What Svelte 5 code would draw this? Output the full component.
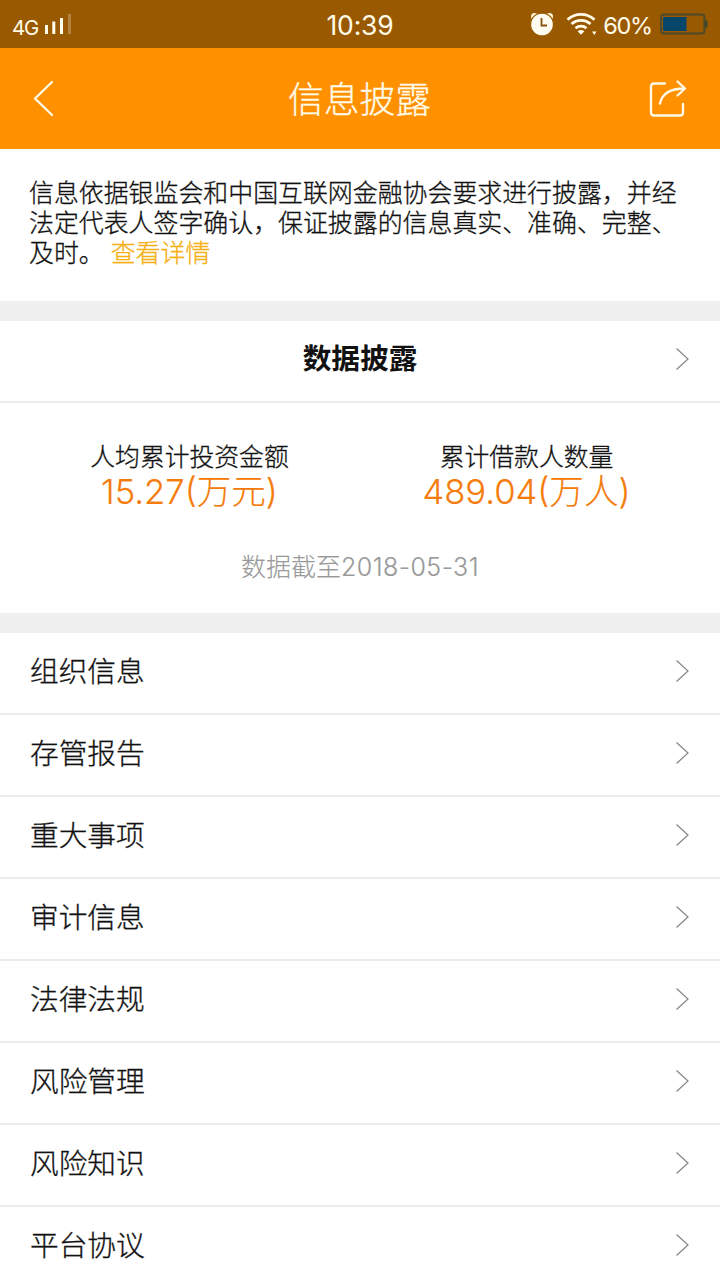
<script lang="ts">
	interface Stat {
		label: string;
		value: string;
		unit: string;
	}

	const stats: Stat[] = [
		{ label: '人均累计投资金额', value: '15.27', unit: '万元' },
		{ label: '累计借款人数量', value: '489.04', unit: '万人' }
	];

	const items = [
		'组织信息',
		'存管报告',
		'重大事项',
		'审计信息',
		'法律法规',
		'风险管理',
		'风险知识',
		'平台协议'
	];
</script>

{#snippet chevron()}
	<svg class="chevron" width="16" height="24" viewBox="0 0 16 24" aria-hidden="true">
		<path d="M2.500 1.500 L14 12 L2.500 22.500" />
	</svg>
{/snippet}

<div class="screen">
	<div class="status">
		<div class="status-left">
			<span class="network">4G</span>
			<svg width="30" height="22" viewBox="0 0 30 22" aria-hidden="true">
				<path d="M2 12h3v9H2zM9.300 8.500h3v12.500h-3zM17 5h3v16h-3z" fill="#fffbe8" />
				<path d="M25 1h3v20h-3z" fill="#b38240" />
			</svg>
		</div>
		<span class="time">10:39</span>
		<div class="status-right">
			<svg width="24" height="24" viewBox="0 0 24 24" aria-hidden="true">
				<circle cx="4.500" cy="4.500" r="3.500" fill="#fff6d8" />
				<circle cx="19.500" cy="4.500" r="3.500" fill="#fff6d8" />
				<circle cx="12" cy="12.500" r="11.400" fill="#fffdf2" stroke="#995900" stroke-width="1.200" />
				<path d="M11.500 6v7.500H17" fill="none" stroke="#8a5310" stroke-width="1.800" />
			</svg>
			<svg class="wifi" width="31" height="24" viewBox="0 0 31 24" aria-hidden="true">
				<path d="M1.500 7.700a20 20 0 0 1 27 0M5.500 12a14 14 0 0 1 19 0M9.500 16.200a8.500 8.500 0 0 1 11 0" fill="none" stroke="#fffbe8" stroke-width="2.800" />
				<path d="M11.600 19.200q3.400-2.600 6.800 0L15 22.800zM26 19.500h4.500l-2.250 3.500z" fill="#fffbe8" />
			</svg>
			<span class="percent">60%</span>
			<svg class="battery" width="48" height="22" viewBox="0 0 48 22" aria-hidden="true">
				<rect x="1" y="1.500" width="43.500" height="19" rx="3" fill="none" stroke="#4c4a28" stroke-width="2" />
				<rect x="3" y="4" width="23.500" height="14" fill="#08456b" />
				<path d="M45 7.500h1.500q1 0 1 1v5q0 1-1 1H45z" fill="#3c4630" />
			</svg>
		</div>
	</div>

	<header class="navbar">
		<button type="button" aria-label="返回">
			<svg width="22" height="38" viewBox="0 0 22 38" aria-hidden="true">
				<path d="M20 2 L3 18.500 L20 35" />
			</svg>
		</button>
		<h1>信息披露</h1>
		<button type="button" aria-label="分享">
			<svg width="38" height="38" viewBox="0 0 38 38" aria-hidden="true">
				<path d="M16 3.500H5Q2 3.500 2 6.500V32.500Q2 35.500 5 35.500H31Q34 35.500 34 32.500V24" />
				<path d="M11 23.500C13 14 20 8.500 35.500 8.500M28.500 1.500L36 8.500L28.500 15.500" />
			</svg>
		</button>
	</header>

	<section class="intro">
		<p>信息依据银监会和中国互联网金融协会要求进行披露，并经法定代表人签字确认，保证披露的信息真实、准确、完整、及时。<a href="#detail">查看详情</a></p>
	</section>

	<section class="data">
		<div class="row data-head">
			<h2>数据披露</h2>
			{@render chevron()}
		</div>
		<div class="stats">
			{#each stats as stat}
				<div class="stat">
					<span class="stat-label">{stat.label}</span>
					<span class="stat-value">{stat.value}({stat.unit})</span>
				</div>
			{/each}
		</div>
		<p class="date">数据截至<span>2018-05-31</span></p>
	</section>

	<nav class="list">
		{#each items as item}
			<div class="row">
				<span>{item}</span>
				{@render chevron()}
			</div>
		{/each}
	</nav>
</div>

<style>
	:global(body) {
		margin: 0;
		overflow: hidden;
	}

	.screen {
		width: 720px;
		height: 1280px;
		overflow: hidden;
		display: flex;
		flex-direction: column;
		background: #f0f0f0;
		color: #111;
		font-family: Inter, 'Noto Sans CJK SC', sans-serif;
		font-weight: 300;
		-webkit-text-stroke: .3px currentColor;
	}

	h1, h2, p {
		margin: 0;
	}

	.status {
		flex: none;
		display: grid;
		grid-template-columns: 1fr auto 1fr;
		align-items: center;
		box-sizing: border-box;
		height: 48px;
		padding: 2px 12px 0;
		background: #995900;
		color: #fffbe8;
		font-weight: 400;
		-webkit-text-stroke: 0;
	}
	.status-left,
	.status-right {
		display: flex;
		align-items: center;
	}
	.status-left {
		gap: 5px;
	}
	.status-left svg {
		margin-bottom: 2px;
	}
	.network {
		font-size: 20.500px;
		letter-spacing: -1.300px;
		padding-top: 4px;
	}
	.time {
		font-size: 26.500px;
		letter-spacing: -.2px;
	}
	.status-right {
		justify-content: flex-end;
	}
	.status-right svg {
		margin-bottom: 3px;
	}
	.status-right .wifi {
		margin-left: 12px;
	}
	.percent {
		margin-left: 6px;
		font-size: 23.500px;
		letter-spacing: -1.200px;
	}
	.status-right .battery {
		margin-left: 8px;
	}

	.navbar {
		flex: none;
		display: flex;
		align-items: center;
		justify-content: space-between;
		box-sizing: border-box;
		height: 101px;
		padding: 0 33px 0 32px;
		background: #ff9000;
		color: #fffbe8;
	}
	.navbar h1 {
		padding-top: 2px;
		font-size: 35.800px;
		font-weight: 300;
		line-height: 50px;
	}
	.navbar button {
		display: flex;
		width: 38px;
		padding: 0;
		border: none;
		background: none;
		color: inherit;
	}
	.navbar path {
		fill: none;
		stroke: currentColor;
		stroke-width: 2.300;
		stroke-linecap: round;
		stroke-linejoin: round;
	}

	.intro {
		flex: none;
		box-sizing: border-box;
		height: 152px;
		padding: 29px 40px 0 29px;
		background: #fff;
		font-size: 24.920px;
		line-height: 30px;
	}
	.intro a {
		margin-left: 7px;
		color: #f5b014;
		text-decoration: none;
	}

	.data {
		flex: none;
		box-sizing: border-box;
		height: 292px;
		margin: 20px 0;
		background: #fff;
	}

	.row {
		flex: none;
		display: flex;
		align-items: center;
		justify-content: space-between;
		box-sizing: border-box;
		height: 82px;
		padding: 0 30px 4px;
		border-bottom: 2px solid #ebebeb;
		background: #fff;
		font-size: 28.700px;
		line-height: 40px;
	}
	.row span {
		padding-top: 2px;
	}
	.chevron {
		fill: none;
		stroke: #858585;
		stroke-width: 1.200;
	}
	.data-head h2 {
		flex: 1;
		padding-left: 16px;
		font-size: 28.700px;
		font-weight: 700;
		text-align: center;
		-webkit-text-stroke: 0;
	}

	.stats {
		display: flex;
		padding: 36px 25px 0 21px;
	}
	.stat {
		flex: 1;
		display: flex;
		flex-direction: column;
		align-items: center;
	}
	.stat-label {
		font-size: 24.800px;
		line-height: 36px;
	}
	.stat-value {
		color: #f57c0c;
		font-size: 34.600px;
		line-height: 32px;
		-webkit-text-stroke: .15px currentColor;
	}

	.date {
		padding-top: 43px;
		color: #999;
		font-size: 25px;
		line-height: 34px;
		text-align: center;
		-webkit-text-stroke: .15px currentColor;
	}
	.date span {
		letter-spacing: .45px;
	}

	.list {
		flex: none;
		display: flex;
		flex-direction: column;
	}
</style>
